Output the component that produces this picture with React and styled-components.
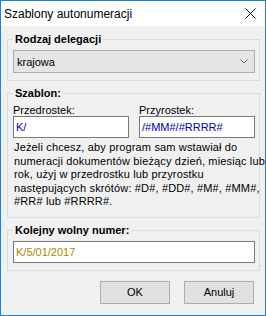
import React from 'react';
import styled, { createGlobalStyle } from 'styled-components';

const GlobalStyle = createGlobalStyle`
  html, body {
    margin: 0;
    padding: 0;
    background: #f0f0f0;
  }
  body {
    font-family: "Liberation Sans", Arial, sans-serif;
    font-size: 11px;
    color: #000;
  }
`;

const Window = styled.div`
  width: 266px;
  height: 316px;
  box-sizing: border-box;
  border: 1px solid #1b82d4;
  background: #f0f0f0;
  display: flex;
  flex-direction: column;
`;

const TitleBar = styled.div`
  height: 25px;
  flex: none;
  background: #fff;
  display: flex;
  align-items: center;
  justify-content: space-between;
  padding: 0 9px 0 3px;
`;

const Title = styled.span`
  font-size: 12px;
  color: #000;
`;

const Body = styled.div`
  flex: 1;
  display: flex;
  flex-direction: column;
  padding: 7px 5px 0 6px;
`;

const Group = styled.fieldset`
  margin: ${props => (props.first ? '0' : '6px')} 0 0 0;
  border: 1px solid #dcdcdc;
  padding: 4px 4px ${props => props.bottom || 7}px 5px;
  min-width: 0;
`;

const Legend = styled.legend`
  font-weight: bold;
  font-size: 11px;
  line-height: 13px;
  padding: 0 2px;
`;

const Combo = styled.div`
  height: 23px;
  box-sizing: border-box;
  background: #e5e5e5;
  border: 1px solid #adadad;
  display: flex;
  align-items: center;
  justify-content: space-between;
  padding: 0 6px 0 3px;
`;

const Columns = styled.div`
  display: grid;
  grid-template-columns: 1fr 1fr;
  column-gap: 10px;
`;

const Field = styled.div`
  display: flex;
  flex-direction: column;
`;

const Label = styled.label`
  line-height: 12px;
  height: 12px;
`;

const TextBox = styled.input`
  height: 22px;
  width: 100%;
  box-sizing: border-box;
  margin: 0;
  border: 1px solid #7a7a7a;
  background: #fff;
  padding: 0 2px;
  font-family: "Liberation Sans", Arial, sans-serif;
  font-size: 11px;
  color: ${props => props.ink || '#0000a8'};
  outline: none;
`;

const Hint = styled.p`
  margin: 3px 0 0 1px;
  line-height: 13.6px;
  letter-spacing: 0.15px;
  white-space: nowrap;
`;

const Buttons = styled.div`
  display: flex;
  justify-content: flex-end;
  gap: 14px;
  margin: 10px 6px 0 0;
`;

const Button = styled.button`
  width: 70px;
  height: 23px;
  box-sizing: border-box;
  border: 1px solid #adadad;
  background: #e1e1e1;
  font-family: "Liberation Sans", Arial, sans-serif;
  font-size: 11px;
  color: #000;
  padding: 0;
`;

export default function App() {
    return (
        <Window>
            <GlobalStyle />
            <TitleBar>
                <Title>Szablony autonumeracji</Title>
                <svg width="11" height="11" viewBox="0 0 11 11">
                    <path d="M0.5 0.5 L10.5 10.5 M10.5 0.5 L0.5 10.5" stroke="#111" strokeWidth="1" fill="none" />
                </svg>
            </TitleBar>
            <Body>
                <Group first>
                    <Legend>Rodzaj delegacji</Legend>
                    <Combo>
                        <span>krajowa</span>
                        <svg width="8" height="5" viewBox="0 0 8 5">
                            <path d="M0.5 0.5 L4 4 L7.5 0.5" stroke="#606060" strokeWidth="1" fill="none" />
                        </svg>
                    </Combo>
                </Group>
                <Group bottom={8}>
                    <Legend>Szablon:</Legend>
                    <Columns>
                        <Field>
                            <Label>Przedrostek:</Label>
                            <TextBox readOnly defaultValue="K/" />
                        </Field>
                        <Field>
                            <Label>Przyrostek:</Label>
                            <TextBox readOnly defaultValue="/#MM#/#RRRR#" />
                        </Field>
                    </Columns>
                    <Hint>
                        Jeżeli chcesz, aby program sam wstawiał do<br />
                        numeracji dokumentów bieżący dzień, miesiąc lub<br />
                        rok, użyj w przedrostku lub przyrostku<br />
                        następujących skrótów: #D#, #DD#, #M#, #MM#,<br />
                        #RR# lub #RRRR#.
                    </Hint>
                </Group>
                <Group>
                    <Legend>Kolejny wolny numer:</Legend>
                    <TextBox readOnly defaultValue="K/5/01/2017" ink="#a88a00" />
                </Group>
                <Buttons>
                    <Button>OK</Button>
                    <Button>Anuluj</Button>
                </Buttons>
            </Body>
        </Window>
    );
}
